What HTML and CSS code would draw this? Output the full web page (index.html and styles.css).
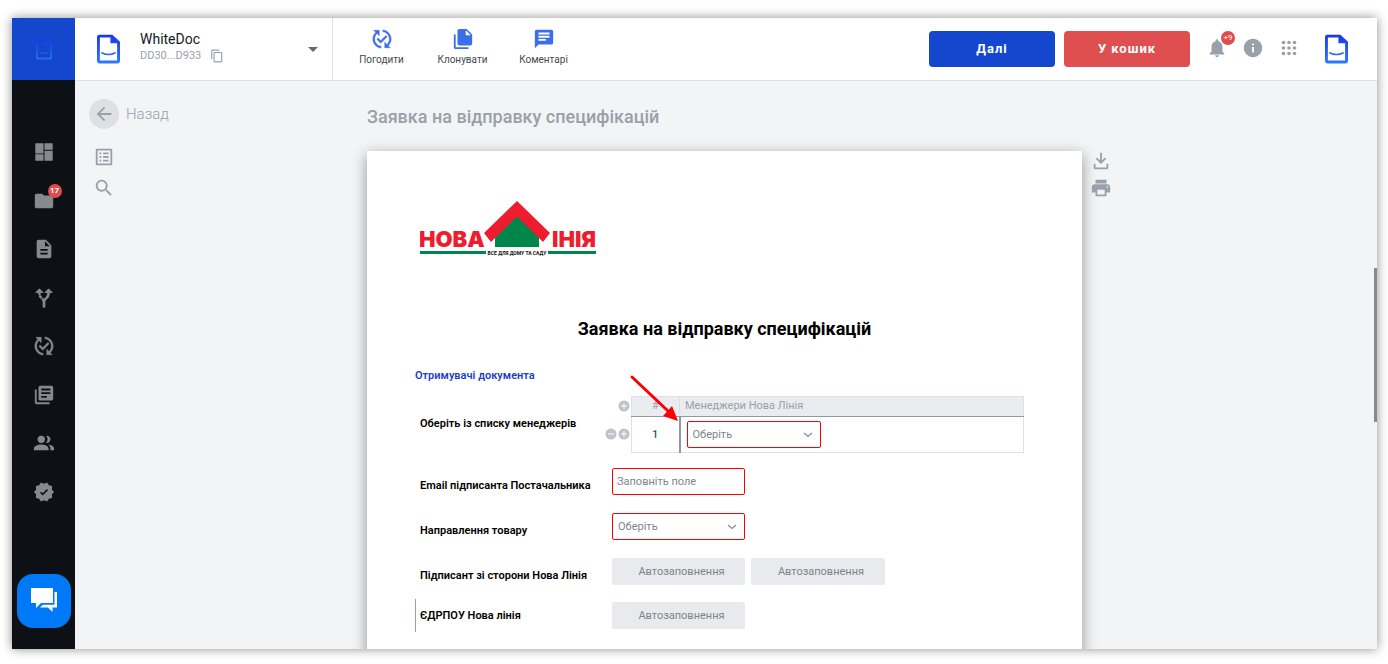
FILE: index.html
```html
<!DOCTYPE html>
<html lang="uk">
<head>
  <meta charset="UTF-8" />
  <meta name="viewport" content="width=device-width, initial-scale=1.0"/>
  <title>WhiteDoc</title>
  <link rel="stylesheet" href="styles.css">
</head>
<body>

  <!-- Shared icons -->
  <svg class="sprite" aria-hidden="true">
    <defs>
      <linearGradient id="doc-gradient" x1="0" y1="0" x2="0" y2="1">
        <stop offset="0" stop-color="#1b35ea"/>
        <stop offset="1" stop-color="#2b7bff"/>
      </linearGradient>
    </defs>
    <symbol id="icon-doc" viewBox="0 0 24 30">
      <path fill="url(#doc-gradient)" fill-rule="evenodd" d="M2.500 0H16L24 7.500V27.500Q24 30 21.500 30H2.500Q0 30 0 27.500V2.500Q0 0 2.500 0ZM3 3V27H21V9H14V3ZM4.500 17.800Q12 22 19.500 17.800V19.600Q12 23.600 4.500 19.600Z"/>
    </symbol>
    <symbol id="icon-approve" viewBox="0 0 24 24">
      <path stroke="currentColor" stroke-width="0.500" d="M17.660 9.530l-7.070 7.070-4.240-4.240 1.410-1.410 2.830 2.830 5.660-5.660 1.410 1.410zM4 12c0-2.330 1.020-4.420 2.620-5.880L9 8.500v-6H3l2.200 2.200C3.240 6.520 2 9.110 2 12c0 5.190 3.950 9.450 9 9.950v-2.020c-3.940-.49-7-3.860-7-7.930zm18 0c0-5.190-3.950-9.450-9-9.950v2.020c3.940.49 7 3.860 7 7.930 0 2.330-1.020 4.420-2.620 5.880L15 15.500v6h6l-2.200-2.200c1.960-1.820 3.200-4.410 3.200-7.300z"/>
    </symbol>
    <symbol id="icon-chevron" viewBox="0 0 10 6">
      <path fill="none" stroke="#858c93" stroke-width="1.300" d="M1 1l4 3.500L9 1"/>
    </symbol>
    <symbol id="icon-plus" viewBox="0 0 12 12">
      <circle cx="6" cy="6" r="5.500" fill="#bfc3c9"/>
      <path stroke="#fff" d="M3 6h6M6 3v6"/>
    </symbol>
    <symbol id="icon-minus" viewBox="0 0 12 12">
      <circle cx="6" cy="6" r="5.500" fill="#bfc3c9"/>
      <path stroke="#fff" d="M3 6h6"/>
    </symbol>
  </svg>

  <div class="window">
    <aside class="sidebar">
      <a href="#" class="sidebar-logo" aria-label="WhiteDoc"><svg><use href="#icon-doc"/></svg></a>
      <nav class="menu">
        <a href="#" aria-label="Dashboard"><svg class="icon" viewBox="0 0 24 24"><path d="M2.500 13.500h9V2.500h-9zm0 8h9v-7h-9zm10 0h9v-11h-9zm0-19v7h9v-7z"/></svg></a>
        <a href="#" aria-label="Folders"><svg class="icon" viewBox="0 0 24 24"><path d="M10 4H4c-1.100 0-1.990.9-1.990 2L2 18c0 1.100.9 2 2 2h16c1.100 0 2-.9 2-2V8c0-1.100-.9-2-2-2h-8l-2-2z"/></svg><span class="badge">17</span></a>
        <a href="#" aria-label="Documents"><svg class="icon" viewBox="0 0 24 24"><path d="M14 2H6c-1.100 0-1.990.9-1.990 2L4 20c0 1.100.89 2 1.990 2H18c1.100 0 2-.9 2-2V8l-6-6zm2 16H8v-2h8v2zm0-4H8v-2h8v2zm-3-5V3.500L18.500 9H13z"/></svg></a>
        <a href="#" aria-label="Routes"><svg class="icon" viewBox="0 0 24 24"><path stroke="currentColor" d="M9.780 11.160l-1.420 1.420c-.68-.69-1.340-1.580-1.790-2.940l1.940-.49c.32.890.77 1.500 1.270 2.010zM11 6L7 2 3 6h3.020c.02.810.08 1.540.19 2.170l1.940-.49C8.080 7.200 8.030 6.630 8.020 6H11zm10 0l-4-4-4 4h2.990c-.1 3.680-1.280 4.750-2.540 5.880-.5.440-1.010.92-1.450 1.550-.34-.49-.73-.88-1.130-1.240L9.460 13.600c.93.850 1.540 1.540 1.540 3.400v5h2v-5c0-2.020.71-2.660 1.790-3.630 1.380-1.240 3.080-2.780 3.200-7.370H21z"/></svg></a>
        <a href="#" aria-label="Approvals"><svg class="icon"><use href="#icon-approve"/></svg></a>
        <a href="#" aria-label="Library"><svg class="icon" viewBox="0 0 24 24"><path d="M4 6H2v14c0 1.100.9 2 2 2h14v-2H4V6zm16-4H8c-1.100 0-2 .9-2 2v12c0 1.100.9 2 2 2h12c1.100 0 2-.9 2-2V4c0-1.100-.9-2-2-2zm-1 9H9V9h10v2zm-4 4H9v-2h6v2zm4-8H9V5h10v2z"/></svg></a>
        <a href="#" aria-label="Contacts"><svg class="icon" viewBox="0 0 24 24"><circle cx="9" cy="8" r="4"/><path d="M9 13.500c-3 0-8 1.500-8 4.500v2h16v-2c0-3-5-4.500-8-4.500zM14.200 11.900a4 4 0 1 0 0-7.800 5.800 5.800 0 0 1 0 7.800zM16.700 13.600c1.300.9 2.300 2.400 2.300 4.400v2h4v-2c0-2.600-3.500-4-6.300-4.400z"/></svg></a>
        <a href="#" aria-label="Verified"><svg class="icon" viewBox="0 0 24 24"><path d="M23 12l-2.440-2.780.34-3.680-3.610-.82-1.890-3.180L12 3 8.600 1.540 6.710 4.720l-3.610.81.340 3.680L1 12l2.440 2.780-.34 3.690 3.610.82 1.890 3.180L12 21l3.400 1.460 1.890-3.180 3.610-.82-.34-3.680L23 12zm-12.400 3.800l-3-3 1.200-1.200 1.800 1.800 4.600-4.600 1.200 1.200-5.800 5.800z"/></svg></a>
      </nav>
      <button class="chat-btn" aria-label="Chat">
        <svg viewBox="0 0 28 26"><path d="M1 0h22v15H11l-5 5v-5H1z"/><path d="M24.500 4H27v15.500h-4.500V24L18 19.500h-8l2.800-2.700h11.700z"/></svg>
      </button>
    </aside>

    <div class="main">
      <header class="topbar">
        <div class="account">
          <svg class="doc-logo"><use href="#icon-doc"/></svg>
          <div class="account-info">
            <div class="account-name">WhiteDoc</div>
            <div class="account-id">DD30...D933
              <button class="icon-btn" aria-label="Copy"><svg class="copy-icon" viewBox="0 0 24 24"><path d="M16 1H4c-1.100 0-2 .9-2 2v14h2V3h12V1zm3 4H8c-1.100 0-2 .9-2 2v14c0 1.100.9 2 2 2h11c1.100 0 2-.9 2-2V7c0-1.100-.9-2-2-2zm0 16H8V7h11v14z"/></svg></button>
            </div>
          </div>
          <button class="icon-btn" aria-label="Switch account"><svg class="caret" viewBox="0 0 10 5"><path d="M0 0h10L5 5z"/></svg></button>
        </div>

        <div class="actions">
          <button class="action"><svg class="icon"><use href="#icon-approve"/></svg>Погодити</button>
          <button class="action"><svg class="icon" viewBox="0 0 24 24"><path d="M16 1H8C6.900 1 6 1.900 6 3v14c0 1.100.9 2 2 2h12c1.100 0 2-.9 2-2V7l-6-6zm-1 7V2.500L20.500 8H15zM4 7v14h14v2H4c-1.100 0-2-.9-2-2V7z"/></svg>Клонувати</button>
          <button class="action"><svg class="icon" viewBox="0 0 24 24"><path d="M20 2H4c-1.100 0-2 .9-2 2v18l4-4h14c1.100 0 2-.9 2-2V4c0-1.100-.9-2-2-2zM6 5h12v2H6zm0 3.500h12v2H6zm8 5.500H6v-2h8z"/></svg>Коментарі</button>
        </div>

        <div class="buttons">
          <button class="btn btn-next">Далі</button>
          <button class="btn btn-trash">У кошик</button>
        </div>

        <div class="status">
          <a href="#" aria-label="Notifications"><svg class="icon" viewBox="0 0 24 24"><path d="M12 22c1.100 0 2-.9 2-2h-4c0 1.100.89 2 2 2zm6-6v-5c0-3.070-1.640-5.640-4.500-6.320V4c0-.83-.67-1.500-1.500-1.500s-1.500.67-1.500 1.500v.68C7.630 5.360 6 7.920 6 11v5l-2 2v1h16v-1l-2-2z"/></svg><span class="badge">+9</span></a>
          <a href="#" aria-label="Info"><svg class="icon" viewBox="0 0 24 24"><path d="M12 2C6.480 2 2 6.480 2 12s4.480 10 10 10 10-4.480 10-10S17.520 2 12 2zm1 15h-2v-6h2v6zm0-8h-2V7h2v2z"/></svg></a>
          <a href="#" aria-label="Apps"><svg class="icon" viewBox="0 0 24 24"><g><circle cx="6" cy="6" r="2"/><circle cx="12" cy="6" r="2"/><circle cx="18" cy="6" r="2"/><circle cx="6" cy="12" r="2"/><circle cx="12" cy="12" r="2"/><circle cx="18" cy="12" r="2"/><circle cx="6" cy="18" r="2"/><circle cx="12" cy="18" r="2"/><circle cx="18" cy="18" r="2"/></g></svg></a>
        </div>
        <svg class="doc-logo"><use href="#icon-doc"/></svg>
      </header>

      <div class="workspace">
        <div class="left-tools">
          <a href="#" class="back">
            <span class="back-circle"><svg class="icon" viewBox="0 0 24 24"><path d="M20 11H7.830l5.590-5.590L12 4l-8 8 8 8 1.410-1.410L7.830 13H20v-2z"/></svg></span>
            Назад
          </a>
          <button class="icon-btn" aria-label="Contents"><svg class="icon" viewBox="0 0 24 24"><path d="M19 5v14H5V5h14m1.100-2H3.900c-.5 0-.9.4-.9.900v16.200c0 .4.4.9.900.9h16.200c.4 0 .9-.5.9-.9V3.900c0-.5-.5-.9-.9-.9zM11 7h6v2h-6V7zm0 4h6v2h-6v-2zm0 4h6v2h-6zM7 7h2v2H7zm0 4h2v2H7zm0 4h2v2H7z"/></svg></button>
          <button class="icon-btn" aria-label="Search"><svg class="icon" viewBox="0 0 24 24"><path d="M15.500 14h-.79l-.28-.27C15.410 12.590 16 11.110 16 9.500 16 5.910 13.090 3 9.500 3S3 5.910 3 9.500 5.910 16 9.500 16c1.610 0 3.090-.59 4.230-1.570l.27.280v.79l5 4.990L20.490 19l-4.990-5zm-6 0C7.010 14 5 11.990 5 9.500S7.010 5 9.500 5 14 7.010 14 9.500 11.990 14 9.500 14z"/></svg></button>
        </div>

        <div class="document">
          <h1 class="page-title">Заявка на відправку специфікацій</h1>
          <div class="sheet">
            <svg class="company-logo" viewBox="0 0 176 55" role="img" aria-label="Нова Лінія">
              <path fill="#00854a" d="M97 14L119 35V46H75V35z"/>
              <path fill="#ee1c2e" d="M97 0L130 32L123 41L97 15.500L71 41L64 32z"/>
              <text class="logo-name" x="-1" y="46">НОВА</text>
              <text class="logo-name" x="176" y="46" text-anchor="end">ІНІЯ</text>
              <path fill="#00854a" d="M0 50h66v3H0zM128 50h48v3h-48z"/>
              <text class="logo-slogan" x="97" y="54" text-anchor="middle">ВСЕ ДЛЯ ДОМУ ТА САДУ</text>
            </svg>

            <h2>Заявка на відправку специфікацій</h2>
            <h3>Отримувачі документа</h3>

            <div class="managers">
              <div class="label">Оберіть із списку менеджерів</div>
              <div class="row-controls">
                <div><button class="icon-btn" aria-label="Додати"><svg><use href="#icon-plus"/></svg></button></div>
                <div>
                  <button class="icon-btn" aria-label="Видалити"><svg><use href="#icon-minus"/></svg></button>
                  <button class="icon-btn" aria-label="Додати"><svg><use href="#icon-plus"/></svg></button>
                </div>
              </div>
              <div class="table-wrap">
                <table>
                  <thead>
                    <tr><th class="num">#</th><th>Менеджери Нова Лінія</th></tr>
                  </thead>
                  <tbody>
                    <tr>
                      <td class="num">1</td>
                      <td>
                        <div class="select">
                          <select aria-label="Менеджери Нова Лінія"><option>Оберіть</option></select>
                          <svg><use href="#icon-chevron"/></svg>
                        </div>
                      </td>
                    </tr>
                  </tbody>
                </table>
                <svg class="arrow" viewBox="0 0 50 50"><path stroke="#fb0007" stroke-width="3" stroke-linecap="round" d="M3 3L39 37"/><path fill="#fb0007" d="M49 47L34 42L43 32z"/></svg>
              </div>
            </div>

            <div class="form-row">
              <label for="email">Email підписанта Постачальника</label>
              <input type="text" id="email" placeholder="Заповніть поле">
            </div>
            <div class="form-row">
              <label for="direction">Направлення товару</label>
              <div class="select">
                <select id="direction"><option>Оберіть</option></select>
                <svg><use href="#icon-chevron"/></svg>
              </div>
            </div>
            <div class="form-row">
              <label for="signer">Підписант зі сторони Нова Лінія</label>
              <input type="text" id="signer" class="auto" placeholder="Автозаповнення" disabled>
              <input type="text" aria-label="Підписант" class="auto" placeholder="Автозаповнення" disabled>
            </div>
            <div class="form-row form-row-marked">
              <label for="code">ЄДРПОУ Нова лінія</label>
              <input type="text" id="code" class="auto" placeholder="Автозаповнення" disabled>
            </div>
          </div>
        </div>

        <div class="right-tools">
          <button class="icon-btn" aria-label="Download"><svg class="icon" viewBox="0 0 24 24"><path d="M11 3h2v8.500l3.300-3.300 1.400 1.400L12 15.300 6.300 9.600l1.400-1.400 3.300 3.300zM4 15h2v4h12v-4h2v4c0 1.100-.9 2-2 2H6c-1.100 0-2-.9-2-2z"/></svg></button>
          <button class="icon-btn" aria-label="Print"><svg class="icon" viewBox="0 0 24 24"><path d="M19 8H5c-1.660 0-3 1.340-3 3v6h4v4h12v-4h4v-6c0-1.660-1.340-3-3-3zm-3 11H8v-5h8v5zm3-7c-.55 0-1-.45-1-1s.45-1 1-1 1 .45 1 1-.45 1-1 1zm-1-9H6v4h12V3z"/></svg></button>
        </div>
        <div class="scrollbar"></div>
      </div>
    </div>
  </div>

</body>
</html>
```
FILE: styles.css
```css
* {
  box-sizing: border-box;
}

body {
  margin: 0;
  font-family: Roboto, sans-serif;
  background-color: white;
}

button {
  font-family: inherit;
  border: none;
  cursor: pointer;
}

a {
  text-decoration: none;
}

svg {
  display: block;
}

.sprite {
  position: absolute;
  width: 0;
  height: 0;
}

.icon {
  width: 22px;
  height: 22px;
  fill: currentColor;
}

.icon-btn {
  padding: 0;
  background: none;
  color: #98a1aa;
}

.badge {
  position: absolute;
  top: -6px;
  right: -7px;
  width: 14px;
  height: 14px;
  border-radius: 50%;
  background-color: #df4c4c;
  color: white;
  font-size: 8px;
  line-height: 14px;
  font-weight: 700;
  text-align: center;
}

.window {
  display: flex;
  height: calc(100vh - 33px);
  margin: 18px 11px 15px 12px;
  box-shadow: 0 0 10px rgba(0,0,0,0.45);
}

/* Sidebar */
.sidebar {
  display: flex;
  flex-direction: column;
  align-items: center;
  flex-shrink: 0;
  width: 63px;
  padding-bottom: 21px;
  background-color: #0d1115;
}

.sidebar-logo {
  display: flex;
  align-items: center;
  justify-content: center;
  width: 100%;
  height: 62px;
  background-color: #1447cd;
}

.sidebar-logo svg {
  width: 16px;
  height: 21px;
  opacity: 0.8;
}

.menu {
  display: flex;
  flex-direction: column;
  justify-content: space-between;
  height: 362px;
  margin-top: 61px;
}

.menu a {
  position: relative;
  color: #87898c;
}

.chat-btn {
  width: 54px;
  height: 54px;
  margin-top: auto;
  padding: 0;
  border-radius: 16px;
  background-color: #0079f8;
}

.chat-btn svg {
  width: 28px;
  height: 26px;
  margin: 0 auto;
  fill: white;
}

/* Top bar */
.main {
  display: flex;
  flex-direction: column;
  flex: 1;
  min-width: 0;
}

.topbar {
  display: flex;
  align-items: center;
  flex-shrink: 0;
  height: 63px;
  padding-right: 29px;
  border-bottom: 1px solid #dee1e4;
  background-color: white;
}

.doc-logo {
  width: 23px;
  height: 30px;
}

.account {
  display: flex;
  align-items: center;
  width: 258px;
  height: 62px;
  padding: 0 14px 0 22px;
  border-right: 1px solid #dee1e4;
}

.account-info {
  flex: 1;
  margin-left: 20px;
  padding-bottom: 4px;
}

.account-name {
  color: #15191d;
  font-size: 14px;
  line-height: 18px;
}

.account-id {
  display: flex;
  align-items: center;
  gap: 9px;
  color: #98a1aa;
  font-size: 11px;
  line-height: 16px;
}

.copy-icon {
  width: 14px;
  height: 14px;
  fill: currentColor;
}

.caret {
  width: 10px;
  height: 5px;
  fill: #666a6e;
}

.actions {
  display: flex;
  margin-left: 8px;
}

.action {
  display: flex;
  flex-direction: column;
  align-items: center;
  gap: 3px;
  width: 81px;
  padding: 0 0 4px;
  background: none;
  color: #45494d;
  font-size: 10px;
  line-height: 14px;
}

.action .icon {
  color: #3b6eea;
}

.buttons {
  display: flex;
  gap: 9px;
  margin-left: auto;
}

.btn {
  width: 126px;
  height: 36px;
  padding-bottom: 2px;
  border-radius: 4px;
  color: white;
  font-size: 13px;
  font-weight: 700;
  letter-spacing: 1px;
}

.btn-next {
  background-color: #1447cd;
}

.btn-trash {
  background-color: #df4f4f;
}

.status {
  display: flex;
  gap: 14px;
  margin: 0 25px 0 16px;
  padding-bottom: 2px;
}

.status a {
  position: relative;
  color: #98a1aa;
}

.status .badge {
  font-weight: 400;
}

/* Workspace */
.workspace {
  position: relative;
  display: grid;
  grid-template-columns: 1fr minmax(0, 715px) 1fr;
  flex: 1;
  min-height: 0;
  padding-right: 3px;
  overflow: hidden;
  background-color: #f3f4f6;
}

.left-tools {
  display: flex;
  flex-direction: column;
  align-items: flex-start;
  gap: 9px;
  padding: 18px 14px;
}

.left-tools .icon-btn {
  margin-left: 4px;
}

.back {
  display: flex;
  align-items: center;
  gap: 7px;
  margin-bottom: 8px;
  color: #98a1aa;
  font-size: 15px;
  font-weight: 300;
}

.back-circle {
  display: flex;
  align-items: center;
  justify-content: center;
  width: 30px;
  height: 30px;
  border-radius: 50%;
  background-color: #dde1e4;
}

.page-title {
  margin: 24px 0 22px;
  color: #98a1aa;
  font-size: 18px;
  line-height: 24px;
  font-weight: 500;
}

.sheet {
  min-height: 100vh;
  padding: 50px 58px 50px 48px;
  background-color: white;
  box-shadow: 0 4px 14px rgba(0,0,0,0.4);
}

.right-tools {
  display: flex;
  flex-direction: column;
  align-items: flex-start;
  gap: 5px;
  padding: 69px 8px;
}

.scrollbar {
  position: absolute;
  top: 33%;
  right: 0;
  width: 3px;
  height: 27%;
  background-color: #88898a;
}

/* Document */
.company-logo {
  width: 176px;
  height: 55px;
  margin-left: 5px;
}

.logo-name {
  fill: #ee1c2e;
  font-family: Inter, sans-serif;
  font-size: 22px;
  font-weight: 900;
}

.logo-slogan {
  fill: #111;
  font-size: 5px;
  font-weight: 700;
}

h2 {
  margin: 61px 0 27px;
  padding-left: 10px;
  font-size: 18px;
  line-height: 24px;
  font-weight: 700;
  text-align: center;
}

h3 {
  margin: 0 0 12px;
  color: #1c3fcb;
  font-size: 11px;
  line-height: 16px;
  font-weight: 600;
}

.label, label {
  font-size: 11px;
  line-height: 16px;
  font-weight: 600;
}

.label {
  padding-bottom: 2px;
}

.managers {
  display: grid;
  grid-template-columns: 185px 26px 1fr;
  align-items: center;
  margin-bottom: 15px;
  padding-left: 5px;
}

.row-controls {
  display: grid;
  align-self: start;
  gap: 16px;
  padding-top: 4px;
}

.row-controls div {
  display: flex;
  justify-content: flex-end;
  gap: 1px;
  padding-right: 1px;
}

.row-controls svg {
  width: 12px;
  height: 12px;
}

.table-wrap {
  position: relative;
}

table {
  width: 100%;
  border-collapse: collapse;
}

th, td {
  border: 1px solid #dfe1e5;
  font-size: 11px;
  text-align: left;
}

th {
  height: 20px;
  padding: 0 5px 2px;
  border-bottom-color: #8f99a3;
  background-color: #ebecf0;
  color: #98a1aa;
  font-weight: 400;
}

td {
  height: 36px;
  padding: 0 6px;
}

.num {
  width: 48px;
  text-align: center;
}

td.num {
  border-right: 2px solid #8f99a3;
  color: #1c5a86;
  font-weight: 500;
}

.arrow {
  position: absolute;
  top: -22px;
  left: -2px;
  width: 50px;
  height: 50px;
}

.form-row {
  display: grid;
  grid-template-columns: 186px 133px 134px;
  align-items: center;
  gap: 6px;
  margin-bottom: 18px;
  padding-left: 5px;
}

.form-row label {
  padding-top: 9px;
}

.form-row-marked {
  height: 33px;
  margin-top: -4px;
  padding-left: 4px;
  border-left: 1px solid #98a1aa;
}

.form-row-marked label {
  padding-top: 0;
}

input, select {
  width: 100%;
  height: 27px;
  padding: 0 4px;
  border: 1px solid #fb0007;
  border-radius: 2px;
  background-color: white;
  color: #808489;
  font-family: inherit;
  font-size: 11px;
}

input::placeholder {
  color: #808489;
}

.select {
  position: relative;
  width: 134px;
}

.form-row .select {
  width: auto;
}

select {
  display: block;
  padding: 0 5px;
  appearance: none;
}

.select svg {
  position: absolute;
  top: 11px;
  right: 8px;
  width: 10px;
  height: 6px;
  pointer-events: none;
}

.auto {
  padding-left: 10px;
  border: none;
  background-color: #e9eaee;
  text-align: center;
}
```
